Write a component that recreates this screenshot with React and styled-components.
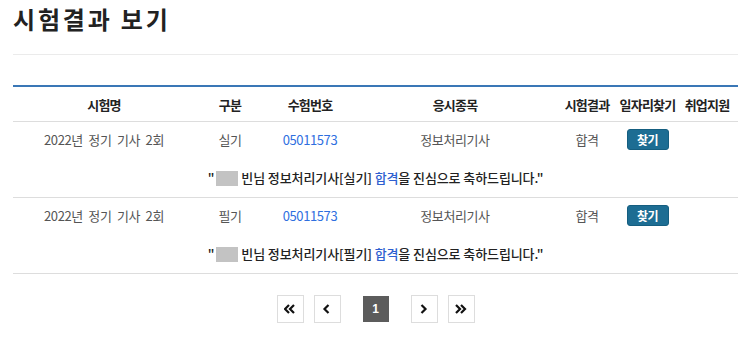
import React from "react";
import styled, { createGlobalStyle } from "styled-components";

const GlobalStyle = createGlobalStyle`
    body {
        margin: 0;
        background: #fff;
        font-family: "Noto Sans CJK KR", "Noto Sans", sans-serif;
    }
`;

const Page = styled.div`
    width: 725px;
    padding-left: 13px;
`;

const Title = styled.h2`
    margin: 0;
    height: 55px;
    padding-top: 2px;
    box-sizing: border-box;
    border-bottom: 1px solid #ebebeb;
    font-size: 24px;
    font-weight: 700;
    line-height: 34px;
    color: #222;
    letter-spacing: 2.8px;
`;

const Table = styled.table`
    width: 100%;
    margin-top: 30px;
    border-collapse: collapse;
    table-layout: fixed;
    border-top: 2px solid #3a77b6;
`;

const Th = styled.th`
    height: 34px;
    padding: 0;
    font-size: 13px;
    font-weight: 700;
    letter-spacing: -0.8px;
    color: #222;
    text-align: center;
    border-bottom: 1px solid #ddd;
    white-space: nowrap;
`;

const Td = styled.td`
    height: 35px;
    padding: 0;
    font-size: 13px;
    letter-spacing: -0.4px;
    word-spacing: 3px;
    color: ${(p) => (p.$num ? "#2f6fdf" : "#555")};
    text-align: center;
    white-space: nowrap;
`;

const MsgCell = styled.td`
    height: 40px;
    padding: 0;
    font-size: 13px;
    font-weight: 500;
    letter-spacing: -0.1px;
    color: #222;
    text-align: center;
    border-bottom: 1px solid #ddd;
`;

const Hidden = styled.span`
    display: inline-block;
    width: 22px;
    height: 15px;
    margin: 0 3px 0 2px;
    vertical-align: -3px;
    background: #c3c3c3;
`;

const Pass = styled.span`
    color: #2f5fd0;
`;

const FindButton = styled.button`
    width: 42px;
    height: 21px;
    padding: 0;
    border: 1px solid #155e80;
    border-radius: 3px;
    background: #1d6d93;
    color: #fff;
    font-family: inherit;
    font-size: 12px;
    font-weight: 700;
    letter-spacing: -0.5px;
    line-height: 18px;
    cursor: pointer;
`;

const Pager = styled.nav`
    display: flex;
    justify-content: center;
    align-items: center;
    margin-top: 21px;
`;

const PageBox = styled.a`
    display: flex;
    align-items: center;
    justify-content: center;
    box-sizing: border-box;
    width: ${(p) => (p.$active ? "26px" : "27px")};
    height: ${(p) => (p.$active ? "26px" : "28px")};
    margin: ${(p) => (p.$active ? "0 17px" : "0 5px")};
    border: ${(p) => (p.$active ? "none" : "1px solid #ddd")};
    background: ${(p) => (p.$active ? "#5c5c5c" : "#fff")};
    color: ${(p) => (p.$active ? "#fff" : "#111")};
    font-family: "Liberation Sans", sans-serif;
    font-size: 12px;
    font-weight: 700;
`;

const Chevron = ({ dir = "left", double = false }) => {
    const one = (x) =>
        dir === "left"
            ? `M${x + 4} 2 L${x} 6 L${x + 4} 10`
            : `M${x} 2 L${x + 4} 6 L${x} 10`;
    const d = double ? one(1) + " " + one(6) : one(3.5);
    return (
        <svg width="12" height="12" viewBox="0 0 12 12">
            <path d={d} fill="none" stroke="#111" strokeWidth="2.2" />
        </svg>
    );
};

const rows = [
    { name: "2022년 정기 기사 2회", type: "실기" },
    { name: "2022년 정기 기사 2회", type: "필기" },
];

const widths = [182, 70, 90, 200, 64, 57, 62];
const heads = ["시험명", "구분", "수험번호", "응시종목", "시험결과", "일자리찾기", "취업지원"];

const App = () => (
    <Page>
        <GlobalStyle />
        <Title>시험결과 보기</Title>

        <Table>
            <colgroup>
                {widths.map((w, i) => (
                    <col key={i} style={{ width: w }} />
                ))}
            </colgroup>
            <thead>
                <tr>
                    {heads.map((h) => (
                        <Th key={h}>{h}</Th>
                    ))}
                </tr>
            </thead>
            <tbody>
                {rows.map((r) => (
                    <React.Fragment key={r.type}>
                        <tr>
                            <Td>{r.name}</Td>
                            <Td>{r.type}</Td>
                            <Td $num>05011573</Td>
                            <Td>정보처리기사</Td>
                            <Td>합격</Td>
                            <Td>
                                <FindButton>찾기</FindButton>
                            </Td>
                            <Td />
                        </tr>
                        <tr>
                            <MsgCell colSpan={7}>
                                "<Hidden />
                                빈님 정보처리기사[{r.type}] <Pass>합격</Pass>을 진심으로 축하드립니다."
                            </MsgCell>
                        </tr>
                    </React.Fragment>
                ))}
            </tbody>
        </Table>

        <Pager>
            <PageBox><Chevron dir="left" double /></PageBox>
            <PageBox><Chevron dir="left" /></PageBox>
            <PageBox $active>1</PageBox>
            <PageBox><Chevron dir="right" /></PageBox>
            <PageBox><Chevron dir="right" double /></PageBox>
        </Pager>
    </Page>
);

export default App;
